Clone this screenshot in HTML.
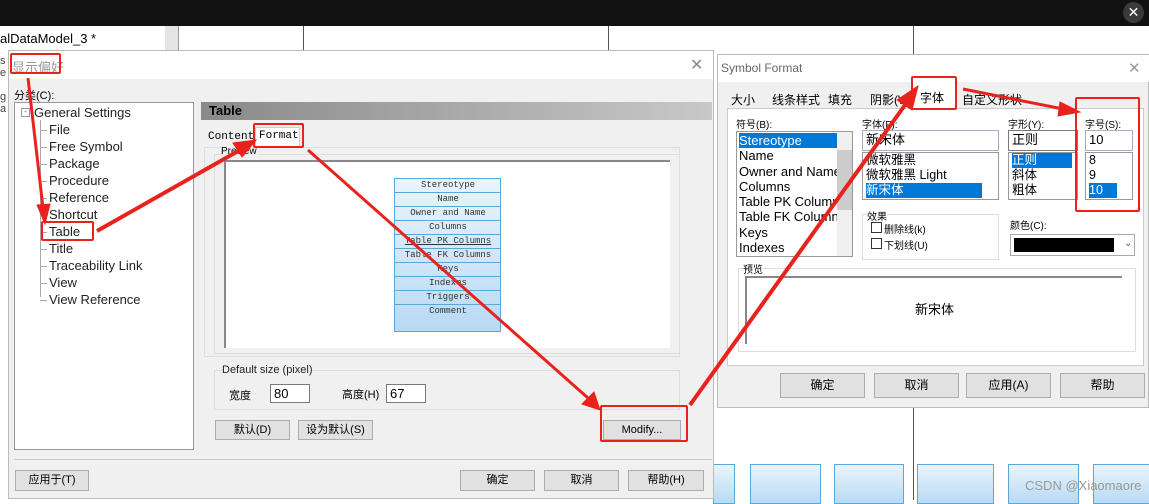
<!DOCTYPE html><html><head><meta charset="utf-8"><style>
*{margin:0;padding:0;box-sizing:border-box}
body{width:1149px;height:500px;overflow:hidden;background:#fff;position:relative;font-family:"Liberation Sans","Noto Sans CJK SC",sans-serif;font-size:12px;color:#000}
.a{position:absolute}
.btn{position:absolute;background:#e1e1e1;border:1px solid #adadad;text-align:center;font-size:11px;line-height:18px}
.in{position:absolute;background:#fff;border:1px solid #7a7a7a;font-size:13px;padding-left:3px;line-height:17px}
.mono{font-family:"Liberation Mono","Noto Sans CJK SC",monospace}
.tree div{height:17px;line-height:17px;font-size:13px;color:#222;position:relative}
.tree div:before{content:"";position:absolute;left:-9px;top:9px;width:7px;border-top:1px solid #aaa}
.tr{position:absolute;left:0;width:106px;height:14px;border-bottom:1px solid #5aa8d8;font-size:9px;text-align:center;line-height:13px;font-family:"Liberation Mono",monospace;color:#333}
.rb{position:absolute;border:2px solid #e8231e;border-radius:2px}
.mini{position:absolute;top:464px;height:40px;border:1px solid #5aa8d8;background:linear-gradient(#eaf4fc,#b8daf4)}
</style></head><body>
<div class="a" style="left:0;top:0;width:1149px;height:26px;background:#111"></div>
<div class="a" style="left:1123px;top:2px;width:21px;height:21px;border-radius:50%;background:#3a3a3a;color:#fff;text-align:center;line-height:20px;font-size:14px">✕</div>
<div class="a" style="left:165px;top:26px;width:13px;height:30px;background:#e4e4e4"></div>
<div class="a" style="left:178px;top:26px;width:1px;height:30px;background:#999"></div>
<div class="a" style="left:303px;top:26px;width:1px;height:30px;background:#555"></div>
<div class="a" style="left:608px;top:26px;width:1px;height:30px;background:#555"></div>
<div class="a" style="left:913px;top:26px;width:1px;height:30px;background:#555"></div>
<div class="a" style="left:913px;top:407px;width:1px;height:93px;background:#555"></div>
<div class="a" style="left:0;top:31px;font-size:13px">alDataModel_3 *</div>
<div class="a" style="left:0;top:55px;font-size:11px;color:#444">s<br>e<br><br>g<br>a</div>
<div class="mini" style="left:713px;width:22px"></div>
<div class="mini" style="left:750px;width:71px"></div>
<div class="mini" style="left:834px;width:70px"></div>
<div class="mini" style="left:917px;width:77px"></div>
<div class="mini" style="left:1008px;width:71px"></div>
<div class="mini" style="left:1093px;width:60px"></div>
<div class="a" style="left:1025px;top:478px;color:#999;font-size:13px">CSDN @Xiaomaore</div>

<div class="a" style="left:8px;top:50px;width:706px;height:449px;background:#f0f0f0;border:1px solid #bbb"></div>
<div class="a" style="left:9px;top:51px;width:704px;height:28px;background:#fff"></div>
<div class="a" style="left:12px;top:57px;font-size:13px;color:#999">显示偏好</div>
<div class="a" style="left:690px;top:55px;font-size:16px;color:#888">✕</div>
<div class="a" style="left:14px;top:87px;font-size:11px">分类(C):</div>
<div class="a" style="left:14px;top:102px;width:180px;height:348px;background:#fff;border:1px solid #999"></div>
<div class="a" style="left:21px;top:108px;width:9px;height:9px;border:1px solid #999;font-size:8px;line-height:6px;text-align:center;color:#555">-</div>
<div class="a" style="left:40px;top:120px;width:1px;height:177px;border-left:1px solid #aaa"></div>
<div class="a" style="left:34px;top:104px;font-size:13px;line-height:17px;color:#222">General Settings</div>
<div class="a tree" style="left:49px;top:121px">
<div>File</div><div>Free Symbol</div><div>Package</div><div>Procedure</div><div>Reference</div><div>Shortcut</div><div>Table</div><div>Title</div><div>Traceability Link</div><div>View</div><div>View Reference</div></div>
<div class="a" style="left:201px;top:102px;width:511px;height:18px;background:linear-gradient(90deg,#8a8a8a,#c8c8c8);font-weight:bold;font-size:13px;padding-left:8px;line-height:18px">Table</div>
<div class="a mono" style="left:208px;top:131px;font-size:11px">Content</div>
<div class="a" style="left:255px;top:127px;width:45px;height:20px;background:#fff;border:1px solid #ccc;border-bottom:none"></div>
<div class="a mono" style="left:259px;top:130px;font-size:11px">Format</div>
<div class="a" style="left:204px;top:147px;width:476px;height:210px;border:1px solid #ddd"></div>
<div class="a" style="left:214px;top:154px;width:466px;height:200px;border:1px solid #ddd"></div>
<div class="a" style="left:221px;top:146px;font-size:10px;background:#f0f0f0">Preview</div>
<div class="a" style="left:224px;top:160px;width:446px;height:188px;background:#fff;border-left:2px solid #888;border-top:2px solid #888"></div>
<div class="a" style="left:394px;top:178px;width:107px;height:154px;border:1px solid #5aa8d8;background:linear-gradient(#eaf4fc,#b8daf4)">
<div class="tr" style="top:0">Stereotype</div><div class="tr" style="top:14px">Name</div><div class="tr" style="top:28px">Owner and Name</div><div class="tr" style="top:42px">Columns</div><div class="tr" style="top:56px;text-decoration:underline">Table PK Columns</div><div class="tr" style="top:70px">Table FK Columns</div><div class="tr" style="top:84px">Keys</div><div class="tr" style="top:98px">Indexes</div><div class="tr" style="top:112px">Triggers</div><div class="tr" style="top:126px;border:none">Comment</div></div>
<div class="a" style="left:214px;top:370px;width:466px;height:40px;border:1px solid #ddd"></div>
<div class="a" style="left:222px;top:364px;font-size:11px;background:#f0f0f0;color:#222">Default size (pixel)</div>
<div class="a" style="left:229px;top:387px;font-size:11px">宽度</div>
<div class="in" style="left:270px;top:384px;width:40px;height:19px">80</div>
<div class="a" style="left:342px;top:386px;font-size:11px">高度(H)</div>
<div class="in" style="left:386px;top:384px;width:40px;height:19px">67</div>
<div class="btn" style="left:215px;top:420px;width:75px;height:20px">默认(D)</div>
<div class="btn" style="left:298px;top:420px;width:75px;height:20px">设为默认(S)</div>
<div class="btn" style="left:603px;top:420px;width:78px;height:20px">Modify...</div>
<div class="a" style="left:14px;top:459px;width:698px;height:1px;background:#ccc"></div>
<div class="btn" style="left:15px;top:470px;width:74px;height:21px">应用于(T)</div>
<div class="btn" style="left:460px;top:470px;width:75px;height:21px">确定</div>
<div class="btn" style="left:544px;top:470px;width:75px;height:21px">取消</div>
<div class="btn" style="left:628px;top:470px;width:76px;height:21px">帮助(H)</div>

<div class="a" style="left:717px;top:54px;width:432px;height:354px;background:#f0f0f0;border:1px solid #bbb"></div>
<div class="a" style="left:718px;top:55px;width:431px;height:27px;background:#fff"></div>
<div class="a" style="left:721px;top:61px;font-size:12px;color:#666">Symbol Format</div>
<div class="a" style="left:1128px;top:59px;font-size:15px;color:#999">✕</div>
<div class="a" style="left:727px;top:108px;width:417px;height:258px;background:#fff;border:1px solid #ccc"></div>
<div class="a" style="left:731px;top:91px;font-size:12px">大小</div>
<div class="a" style="left:772px;top:91px;font-size:12px">线条样式</div>
<div class="a" style="left:828px;top:91px;font-size:12px">填充</div>
<div class="a" style="left:870px;top:91px;font-size:12px">阴影(W)</div>
<div class="a" style="left:913px;top:80px;width:42px;height:29px;background:#fff"></div>
<div class="a" style="left:920px;top:89px;font-size:12px">字体</div>
<div class="a" style="left:962px;top:91px;font-size:12px">自定义形状</div>
<div class="a" style="left:736px;top:116px;font-size:10px">符号(B):</div>
<div class="a" style="left:736px;top:131px;width:117px;height:126px;border:1px solid #999;background:#fff;font-size:13px;line-height:15.3px;padding:1px 2px">
<div style="background:#0078d7;color:#fff;width:98px">Stereotype</div><div>Name</div><div style="white-space:nowrap;overflow:hidden;width:98px">Owner and Name</div><div>Columns</div><div style="white-space:nowrap;overflow:hidden;width:98px">Table PK Column</div><div style="white-space:nowrap;overflow:hidden;width:98px">Table FK Column</div><div>Keys</div><div>Indexes</div></div>
<div class="a" style="left:837px;top:132px;width:15px;height:124px;background:#f0f0f0"><div style="margin-top:18px;height:60px;background:#cdcdcd"></div></div>
<div class="a" style="left:862px;top:116px;font-size:10px">字体(F):</div>
<div class="in" style="left:862px;top:130px;width:137px;height:21px;font-size:13px;border-color:#aac">新宋体</div>
<div class="a" style="left:862px;top:152px;width:137px;height:48px;border:1px solid #999;background:#fff;font-size:12.5px;line-height:15px;padding-left:3px;overflow:hidden">
<div>微软雅黑</div><div>微软雅黑 Light</div><div style="background:#0078d7;color:#fff;width:116px">新宋体</div></div>
<div class="a" style="left:1008px;top:116px;font-size:10px">字形(Y):</div>
<div class="in" style="left:1008px;top:130px;width:70px;height:21px">正则</div>
<div class="a" style="left:1008px;top:152px;width:70px;height:48px;border:1px solid #999;background:#fff;font-size:12.5px;line-height:15px;padding-left:3px;overflow:hidden">
<div style="background:#0078d7;color:#fff;width:60px">正则</div><div>斜体</div><div>粗体</div></div>
<div class="a" style="left:1085px;top:116px;font-size:10px">字号(S):</div>
<div class="in" style="left:1085px;top:130px;width:48px;height:21px;border-color:#aac">10</div>
<div class="a" style="left:1085px;top:152px;width:48px;height:48px;border:1px solid #999;background:#fff;font-size:12.5px;line-height:15px;padding-left:3px">
<div>8</div><div>9</div><div style="background:#0078d7;color:#fff;width:28px">10</div></div>
<div class="a" style="left:862px;top:214px;width:137px;height:46px;border:1px solid #ddd"></div>
<div class="a" style="left:867px;top:208px;font-size:10px;background:#fff">效果</div>
<div class="a" style="left:871px;top:222px;width:11px;height:11px;border:1px solid #333"></div>
<div class="a" style="left:884px;top:221px;font-size:10px">删除线(k)</div>
<div class="a" style="left:871px;top:238px;width:11px;height:11px;border:1px solid #333"></div>
<div class="a" style="left:884px;top:237px;font-size:10px">下划线(U)</div>
<div class="a" style="left:1010px;top:217px;font-size:10px">颜色(C):</div>
<div class="a" style="left:1010px;top:234px;width:125px;height:22px;border:1px solid #aaa;background:#fff"><div style="margin:3px;width:100px;height:14px;background:#000"></div></div>
<div class="a" style="left:1124px;top:238px;font-size:10px;color:#555">⌄</div>
<div class="a" style="left:738px;top:268px;width:398px;height:84px;border:1px solid #ddd"></div>
<div class="a" style="left:743px;top:261px;font-size:10px;background:#fff">预览</div>
<div class="a" style="left:745px;top:276px;width:377px;height:68px;border-left:2px solid #888;border-top:2px solid #888;background:#fff;text-align:center;line-height:64px;font-size:13px">新宋体</div>
<div class="btn" style="left:780px;top:373px;width:85px;height:25px;line-height:23px;font-size:12px">确定</div>
<div class="btn" style="left:874px;top:373px;width:85px;height:25px;line-height:23px;font-size:12px">取消</div>
<div class="btn" style="left:966px;top:373px;width:85px;height:25px;line-height:23px;font-size:12px">应用(A)</div>
<div class="btn" style="left:1060px;top:373px;width:85px;height:25px;line-height:23px;font-size:12px">帮助</div>

<div class="rb" style="left:10px;top:53px;width:51px;height:21px"></div>
<div class="rb" style="left:41px;top:221px;width:53px;height:20px"></div>
<div class="rb" style="left:253px;top:123px;width:51px;height:25px"></div>
<div class="rb" style="left:600px;top:405px;width:88px;height:37px"></div>
<div class="rb" style="left:911px;top:76px;width:46px;height:34px"></div>
<div class="rb" style="left:1075px;top:97px;width:65px;height:115px"></div>
<svg class="a" style="left:0;top:0" width="1149" height="500">
<g stroke="#e8231e" fill="#e8231e">
<line x1="28" y1="78" x2="43" y2="208" stroke-width="3"/><polygon points="37,205 50,204 45,224"/>
<line x1="97" y1="231" x2="240" y2="150" stroke-width="4"/><polygon points="233,143 242,157 256,140"/>
<line x1="308" y1="150" x2="588" y2="398" stroke-width="3"/><polygon points="582,404 594,392 600,410"/>
<line x1="690" y1="405" x2="905" y2="105" stroke-width="4"/><polygon points="897,100 912,110 918,86"/>
<line x1="963" y1="89" x2="1063" y2="109" stroke-width="3"/><polygon points="1060,102 1058,116 1080,112"/>
</g></svg>
</body></html>
